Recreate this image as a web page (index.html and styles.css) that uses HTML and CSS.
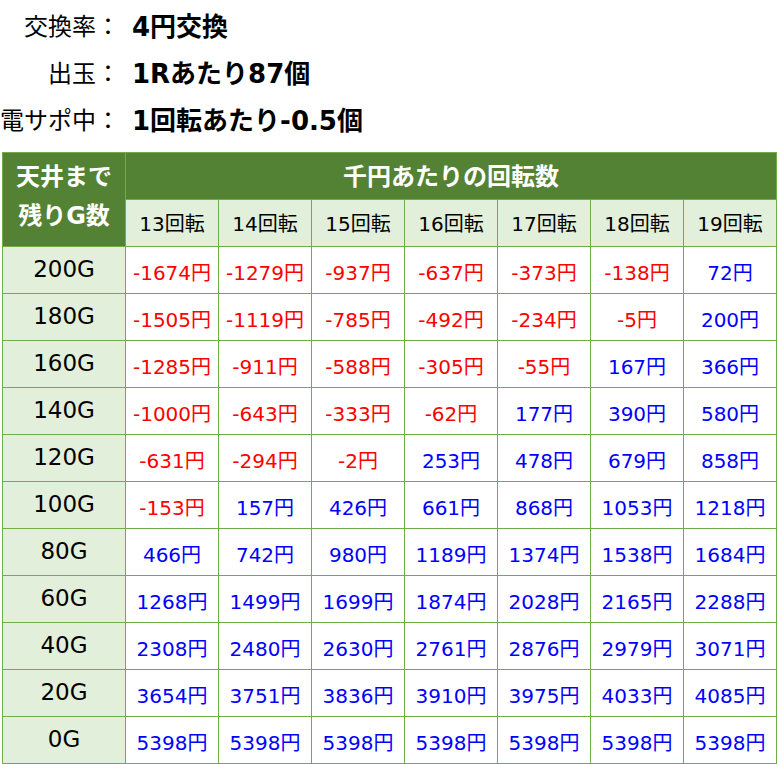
FILE: index.html
```html
<!DOCTYPE html>
<html lang="ja">
<head>
<meta charset="utf-8">
<title>天井期待値</title>
<link rel="stylesheet" href="styles.css">
</head>
<body>
<div class="info">
  <div class="info-row"><span class="label">交換率：</span><span class="value">4円交換</span></div>
  <div class="info-row"><span class="label">出玉：</span><span class="value">1Rあたり87個</span></div>
  <div class="info-row"><span class="label">電サポ中：</span><span class="value">1回転あたり-0.5個</span></div>
</div>
<div class="table">
  <div class="corner">天井まで<br>残りG数</div>
  <div class="head-main">千円あたりの回転数</div>
  <div class="sub">13回転</div><div class="sub">14回転</div><div class="sub">15回転</div><div class="sub">16回転</div><div class="sub">17回転</div><div class="sub">18回転</div><div class="sub">19回転</div>

  <div class="rowhead">200G</div>
  <div class="cell neg">-1674円</div><div class="cell neg">-1279円</div><div class="cell neg">-937円</div><div class="cell neg">-637円</div><div class="cell neg">-373円</div><div class="cell neg">-138円</div><div class="cell pos">72円</div>

  <div class="rowhead">180G</div>
  <div class="cell neg">-1505円</div><div class="cell neg">-1119円</div><div class="cell neg">-785円</div><div class="cell neg">-492円</div><div class="cell neg">-234円</div><div class="cell neg">-5円</div><div class="cell pos">200円</div>

  <div class="rowhead">160G</div>
  <div class="cell neg">-1285円</div><div class="cell neg">-911円</div><div class="cell neg">-588円</div><div class="cell neg">-305円</div><div class="cell neg">-55円</div><div class="cell pos">167円</div><div class="cell pos">366円</div>

  <div class="rowhead">140G</div>
  <div class="cell neg">-1000円</div><div class="cell neg">-643円</div><div class="cell neg">-333円</div><div class="cell neg">-62円</div><div class="cell pos">177円</div><div class="cell pos">390円</div><div class="cell pos">580円</div>

  <div class="rowhead">120G</div>
  <div class="cell neg">-631円</div><div class="cell neg">-294円</div><div class="cell neg">-2円</div><div class="cell pos">253円</div><div class="cell pos">478円</div><div class="cell pos">679円</div><div class="cell pos">858円</div>

  <div class="rowhead">100G</div>
  <div class="cell neg">-153円</div><div class="cell pos">157円</div><div class="cell pos">426円</div><div class="cell pos">661円</div><div class="cell pos">868円</div><div class="cell pos">1053円</div><div class="cell pos">1218円</div>

  <div class="rowhead">80G</div>
  <div class="cell pos">466円</div><div class="cell pos">742円</div><div class="cell pos">980円</div><div class="cell pos">1189円</div><div class="cell pos">1374円</div><div class="cell pos">1538円</div><div class="cell pos">1684円</div>

  <div class="rowhead">60G</div>
  <div class="cell pos">1268円</div><div class="cell pos">1499円</div><div class="cell pos">1699円</div><div class="cell pos">1874円</div><div class="cell pos">2028円</div><div class="cell pos">2165円</div><div class="cell pos">2288円</div>

  <div class="rowhead">40G</div>
  <div class="cell pos">2308円</div><div class="cell pos">2480円</div><div class="cell pos">2630円</div><div class="cell pos">2761円</div><div class="cell pos">2876円</div><div class="cell pos">2979円</div><div class="cell pos">3071円</div>

  <div class="rowhead">20G</div>
  <div class="cell pos">3654円</div><div class="cell pos">3751円</div><div class="cell pos">3836円</div><div class="cell pos">3910円</div><div class="cell pos">3975円</div><div class="cell pos">4033円</div><div class="cell pos">4085円</div>

  <div class="rowhead">0G</div>
  <div class="cell pos">5398円</div><div class="cell pos">5398円</div><div class="cell pos">5398円</div><div class="cell pos">5398円</div><div class="cell pos">5398円</div><div class="cell pos">5398円</div><div class="cell pos">5398円</div>
</div>
</body>
</html>
```

FILE: styles.css
```css
html, body {
  margin: 0;
  padding: 0;
  background: #ffffff;
}

body {
  font-family: "DejaVu Sans", "Noto Sans CJK JP", sans-serif;
  color: #000000;
  overflow: hidden;
}

.info {
  padding-top: 4px;
}

.info-row {
  display: flex;
  align-items: center;
  height: 47px;
}

.label {
  width: 120px;
  text-align: right;
  font-size: 24px;
  line-height: 47px;
}

.value {
  margin-left: 12px;
  font-size: 26px;
  font-weight: bold;
  line-height: 47px;
}

.table {
  margin: 7px 0 0 2px;
  width: 775px;
  box-sizing: border-box;
  display: grid;
  grid-template-columns: 122px repeat(7, 92px);
  grid-auto-rows: 46px;
  gap: 1px;
  padding: 1px;
  background: #70ad47;
}

.corner {
  grid-row: span 2;
  background: #548235;
  color: #ffffff;
  font-weight: bold;
  font-size: 24px;
  line-height: 39px;
  display: flex;
  align-items: center;
  justify-content: center;
  text-align: center;
  padding-bottom: 6px;
}

.head-main {
  grid-column: span 7;
  background: #548235;
  color: #ffffff;
  font-weight: bold;
  font-size: 24px;
  display: flex;
  align-items: center;
  justify-content: center;
  padding-bottom: 4px;
}

.sub {
  background: #e2efda;
  font-size: 20px;
  display: flex;
  align-items: center;
  justify-content: center;
  padding-bottom: 2px;
}

.rowhead {
  background: #e2efda;
  font-size: 23px;
  display: flex;
  align-items: center;
  justify-content: center;
  padding-bottom: 3px;
}

.cell {
  background: #ffffff;
  font-size: 20px;
  display: flex;
  align-items: center;
  justify-content: center;
  padding-top: 3px;
  white-space: nowrap;
}

.neg {
  color: #ff0000;
}

.pos {
  color: #0000ff;
}
```
